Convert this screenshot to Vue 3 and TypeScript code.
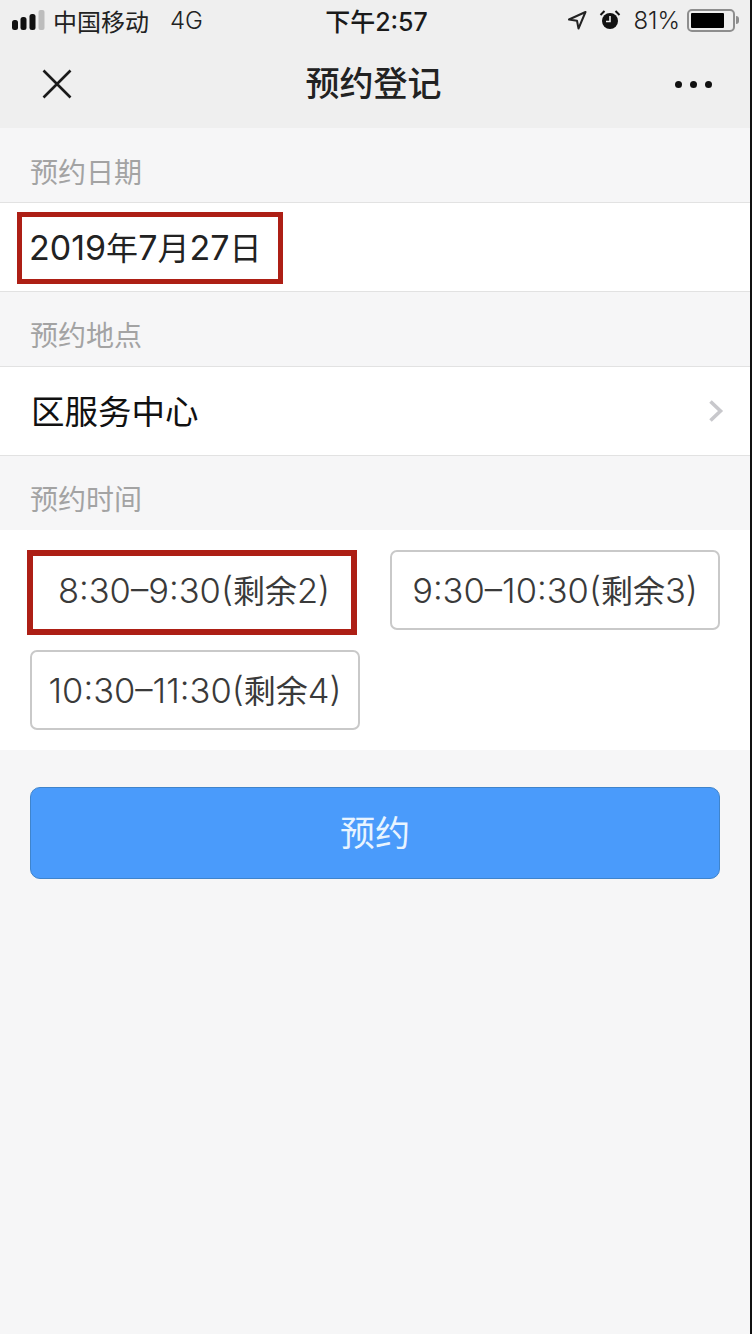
<script setup lang="ts">
const slots = [
  { id: 1, time: '8:30–9:30', left: 2, marked: true },
  { id: 2, time: '9:30–10:30', left: 3, marked: false },
  { id: 3, time: '10:30–11:30', left: 4, marked: false },
]
</script>

<template>
  <div class="frame">
    <div class="page">
      <header class="top">
        <div class="status">
          <div class="status-left">
            <svg class="signal" width="33" height="20" viewBox="0 0 33 20">
              <rect x="0" y="10" width="6" height="10" rx="2.5" fill="#111" />
              <rect x="8.5" y="7" width="6" height="13" rx="2.5" fill="#111" />
              <rect x="17.5" y="4" width="6" height="16" rx="2.5" fill="#111" />
              <rect x="26.5" y="0" width="6" height="20" rx="2" fill="#bdbdbd" />
            </svg>
            <span class="carrier">中国移动</span>
            <span class="net">4G</span>
          </div>
          <div class="clock">下午2:57</div>
          <div class="status-right">
            <svg width="20" height="20" viewBox="0 0 20 20">
              <path d="M18.5 2 L2 9.5 L10 10.8 L11.5 18.5 Z" fill="none" stroke="#222" stroke-width="2" stroke-linejoin="round" />
            </svg>
            <svg class="alarm" width="22" height="22" viewBox="0 0 22 22">
              <circle cx="11" cy="12" r="8" fill="#111" />
              <path d="M11 7 V12.5 H7" fill="none" stroke="#eee" stroke-width="1.6" />
              <path d="M1.5 6 L5.5 2 M20.5 6 L16.5 2" stroke="#111" stroke-width="2" />
            </svg>
            <span class="pct">81%</span>
            <div class="battery"><div class="battery-fill"></div></div>
            <div class="battery-nub"></div>
          </div>
        </div>
        <div class="nav">
          <svg class="close" width="30" height="30" viewBox="0 0 30 30">
            <path d="M1.5 1.5 L28.5 28.5 M28.5 1.5 L1.5 28.5" stroke="#1a1a1a" stroke-width="2.6" />
          </svg>
          <h1 class="title">预约登记</h1>
          <div class="dots"><i></i><i></i><i></i></div>
        </div>
      </header>

      <div class="label first">预约日期</div>
      <section class="row">
        <div class="date marked"><span>2019<span class="cjk">年</span>7<span class="cjk">月</span>27<span class="cjk">日</span></span></div>
      </section>

      <div class="label">预约地点</div>
      <section class="row place">
        <span class="place-name">区服务中心</span>
        <svg class="chev" width="16" height="24" viewBox="0 0 16 24">
          <path d="M2.5 2.5 L12.5 12 L2.5 21.5" fill="none" stroke="#c8c8cc" stroke-width="3.6" />
        </svg>
      </section>

      <div class="label">预约时间</div>
      <section class="slots">
        <div v-for="s in slots" :key="s.id" class="slot" :class="{ picked: s.marked }">
          <span>{{ s.time }}(<span class="cjk">剩余</span>{{ s.left }})</span>
        </div>
      </section>

      <button class="submit" type="button">预约</button>
    </div>
  </div>
</template>

<style>
html, body { margin: 0; padding: 0; background: #000; }
</style>

<style scoped>
.frame {
  width: 752px;
  height: 1334px;
  background: #111;
  overflow: hidden;
  font-family: Inter, "Liberation Sans", "Noto Sans CJK SC", sans-serif;
}
.page {
  width: 750px;
  height: 1334px;
  background: #f6f6f7;
  display: flex;
  flex-direction: column;
}
.top {
  height: 128px;
  background: #efefef;
  flex: none;
}
.status {
  height: 40px;
  display: grid;
  grid-template-columns: 1fr auto 1fr;
  align-items: center;
  color: #222;
  font-size: 24px;
}
.status-left {
  display: flex;
  align-items: center;
  padding-left: 12px;
}
.signal { margin-right: 8px; }
.carrier { font-size: 24px; }
.net { margin-left: 21px; font-weight: 300; }
.clock {
  font-size: 25px;
  font-weight: 500;
  color: #1a1a1a;
  padding-left: 3px;
}
.status-right {
  display: flex;
  align-items: center;
  justify-content: flex-end;
  padding-right: 11px;
}
.alarm { margin-left: 12px; }
.pct { margin-left: 12px; margin-right: 7px; font-weight: 300; }
.battery {
  width: 48px;
  height: 23px;
  box-sizing: border-box;
  border: 2px solid #8e8e8e;
  border-radius: 5px;
  padding: 2px;
}
.battery-fill { width: 82%; height: 100%; background: #000; border-radius: 1px; }
.battery-nub { width: 3px; height: 8px; background: #8e8e8e; border-radius: 0 3px 3px 0; margin-left: 1px; }
.nav {
  height: 88px;
  display: flex;
  align-items: center;
  justify-content: space-between;
  padding: 0 38px 0 42px;
}
.title {
  margin: 0;
  font-size: 34px;
  line-height: 48px;
  font-weight: 500;
  color: #222;
}
.dots { display: flex; gap: 8px; }
.dots i { width: 7px; height: 7px; border-radius: 50%; background: #111; display: block; }
.label {
  height: 74px;
  box-sizing: border-box;
  padding: 9px 30px 0;
  display: flex;
  align-items: center;
  font-size: 28px;
  color: #a3a3a3;
  flex: none;
}
.label.first { padding-top: 12px; }
.row {
  height: 90px;
  box-sizing: border-box;
  background: #fff;
  border-top: 1px solid #e2e2e2;
  border-bottom: 1px solid #e2e2e2;
  display: flex;
  align-items: center;
  justify-content: space-between;
  padding: 0 26px 0 17px;
  flex: none;
}
.date {
  box-sizing: border-box;
  width: 266px;
  height: 72px;
  margin-top: 2px;
  display: flex;
  align-items: center;
  padding: 0 0 4px 7px;
  font-size: 34px;
  font-weight: 400;
  color: #222;
  white-space: nowrap;
}
.marked { border: 5px solid #ad1f15; }
.place { padding-left: 31px; }
.place-name { font-size: 33.5px; color: #111; padding-bottom: 4px; }
.slots {
  background: #fff;
  display: grid;
  grid-template-columns: 330px 330px;
  grid-auto-rows: 80px;
  column-gap: 30px;
  row-gap: 20px;
  padding: 20px 30px;
  flex: none;
}
.slot {
  box-sizing: border-box;
  height: 80px;
  border: 2px solid #c9c9c9;
  border-radius: 7px;
  display: flex;
  align-items: center;
  justify-content: center;
  padding-bottom: 2px;
  font-size: 34.5px;
  font-weight: 300;
  color: #3a3a3a;
  white-space: nowrap;
}
.cjk { font-size: 32px; font-weight: 400; }
.slot.picked {
  border: 6px solid #ad1f15;
  border-radius: 0;
  margin-left: -3px;
  width: 330px;
  height: 85px;
  padding: 0 0 7px 4px;
}
.submit {
  margin: 37px 30px 0;
  height: 92px;
  width: 690px;
  flex: none;
  border: 1px solid #3f84cc;
  border-radius: 10px;
  background: #4a9bfb;
  color: #e8f4ff;
  font-size: 35px;
  font-family: inherit;
  padding: 0 0 6px;
}
</style>
